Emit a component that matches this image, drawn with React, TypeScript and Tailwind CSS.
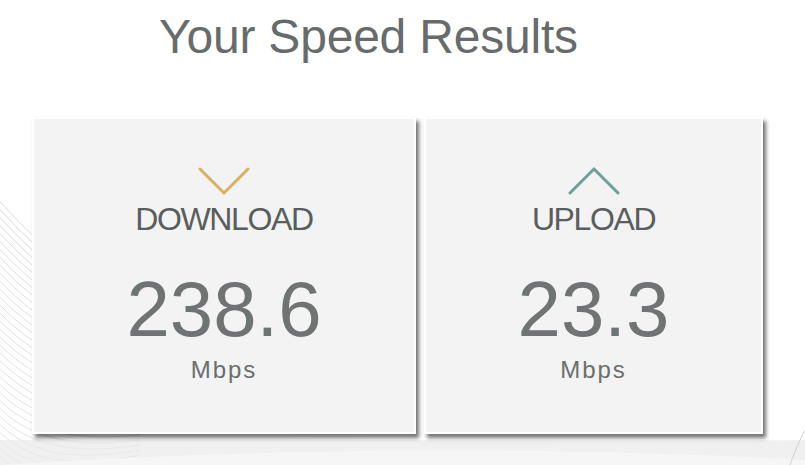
import React from "react";

type Result = {
  label: string;
  value: string;
  direction: "down" | "up";
  width: string;
};

const results: Result[] = [
  { label: "DOWNLOAD", value: "238.6", direction: "down", width: "w-[384px]" },
  { label: "UPLOAD", value: "23.3", direction: "up", width: "w-[339px]" },
];

function Chevron({ direction }: { direction: "down" | "up" }) {
  const down = direction === "down";
  return (
    <svg width="52" height="30" viewBox="0 0 52 30" fill="none">
      <path
        d={down ? "M2 3 L26 27 L50 3" : "M2 27 L26 3 L50 27"}
        stroke={down ? "#d8b062" : "#6b9f98"}
        strokeWidth="3"
        strokeLinecap="round"
      />
    </svg>
  );
}

// faint hatch and swoosh behind the cards
function Backdrop() {
  const lines = Array.from({ length: 34 }, (_, i) => i);
  return (
    <svg
      className="absolute inset-0"
      width="805"
      height="465"
      viewBox="0 0 805 465"
      fill="none"
    >
      {lines.map((i) => (
        <path
          key={i}
          d={`M-10 ${190 + i * 8} C 20 ${225 + i * 8}, 60 ${268 + i * 7}, 140 ${310 + i * 5}`}
          stroke="#bdbdbd"
          strokeOpacity={0.55 - i * 0.005}
          strokeWidth="1"
        />
      ))}
      <path d="M0 440 C 250 438, 550 442, 805 440 L805 465 L0 465 Z" fill="#e9e9e9" fillOpacity="0.7" />
      <path d="M0 465 C 300 445, 600 448, 805 460 L805 465 Z" fill="#f6f6f6" />
      <path d="M790 465 C 795 450, 800 440, 805 430" stroke="#d0d0d0" strokeWidth="1" />
    </svg>
  );
}

export default function App() {
  return (
    <div className="relative h-[465px] w-[805px] overflow-hidden bg-white font-['Liberation_Sans',Arial,sans-serif]">
      <Backdrop />
      <div className="relative flex flex-col">
        <h1 className="ml-[159px] mt-[7px] h-[60px] text-[48px] leading-[60px] tracking-[-0.2px] text-[#676b6b]">
          Your Speed Results
        </h1>
        <div className="mt-[50px] flex gap-[8px] pl-[32px]">
          {results.map((item) => (
            <div
              key={item.label}
              className={`${item.width} flex h-[317px] flex-col items-center border-2 border-white bg-[#f3f3f3] pt-[47px] shadow-[3px_4px_4px_rgba(0,0,0,0.55)]`}
            >
              <Chevron direction={item.direction} />
              <div className="mt-[5px] text-[32px] leading-[36px] tracking-[-1.4px] text-[#5a5d5d]">
                {item.label}
              </div>
              <div className="mt-[32px] text-[78px] leading-[80px] text-[#6f7373]">
                {item.value}
              </div>
              <div className="mt-[7px] text-[24px] leading-[28px] tracking-[2px] text-[#6a6e6e]">
                Mbps
              </div>
            </div>
          ))}
        </div>
      </div>
    </div>
  );
}
